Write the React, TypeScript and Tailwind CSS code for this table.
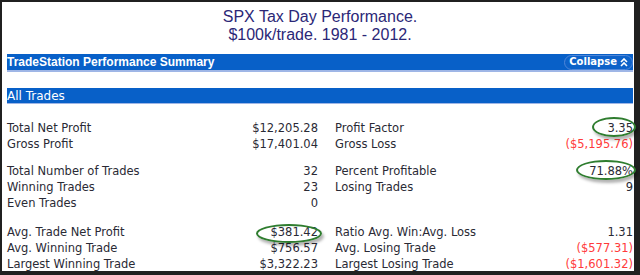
import React from 'react';

type Row = { label: string; value: string; red?: boolean };

const left: Row[][] = [
  [
    { label: 'Total Net Profit', value: '$12,205.28' },
    { label: 'Gross Profit', value: '$17,401.04' },
  ],
  [
    { label: 'Total Number of Trades', value: '32' },
    { label: 'Winning Trades', value: '23' },
    { label: 'Even Trades', value: '0' },
  ],
  [
    { label: 'Avg. Trade Net Profit', value: '$381.42' },
    { label: 'Avg. Winning Trade', value: '$756.57' },
    { label: 'Largest Winning Trade', value: '$3,322.23' },
  ],
];

const right: Row[][] = [
  [
    { label: 'Profit Factor', value: '3.35' },
    { label: 'Gross Loss', value: '($5,195.76)', red: true },
  ],
  [
    { label: 'Percent Profitable', value: '71.88%' },
    { label: 'Losing Trades', value: '9' },
    { label: '', value: '' },
  ],
  [
    { label: 'Ratio Avg. Win:Avg. Loss', value: '1.31' },
    { label: 'Avg. Losing Trade', value: '($577.31)', red: true },
    { label: 'Largest Losing Trade', value: '($1,601.32)', red: true },
  ],
];

function Group({ rows }: { rows: Row[] }) {
  return (
    <div className="flex flex-col">
      {rows.map((r, i) => (
        <div key={i} className="flex h-4 items-center justify-between leading-4">
          <span>{r.label}</span>
          <span className={r.red ? 'text-[#ff3b3b]' : ''}>{r.value}</span>
        </div>
      ))}
    </div>
  );
}

function Column({ groups, className }: { groups: Row[][]; className?: string }) {
  return (
    <div className={'flex flex-col ' + (className ?? '')}>
      <Group rows={groups[0]} />
      <div className="mt-[11px]">
        <Group rows={groups[1]} />
      </div>
      <div className="mt-[13px]">
        <Group rows={groups[2]} />
      </div>
    </div>
  );
}

// green hand-drawn style highlight around a value
function Ring({ className }: { className: string }) {
  return (
    <div
      className={
        'absolute rounded-[50%] border-2 border-[#2f7d2f] shadow-[2px_3px_3px_rgba(0,0,0,0.3)] ' + className
      }
    />
  );
}

export default function App() {
  return (
    <div className="h-[275px] w-[640px] bg-[#202020] pl-[2px] pr-[6px] pt-[2px] pb-[4px]">
      <div className="relative h-full bg-white pl-[5px] pr-[1px] font-['DejaVu_Sans',sans-serif] text-[#2a2a35]">
        {/* title */}
        <div className="pt-[6px] text-center font-['Liberation_Sans',Arial,sans-serif] text-[16px] leading-[18px] text-[#2b2777]">
          <div>SPX Tax Day Performance.</div>
          <div>$100k/trade. 1981 - 2012.</div>
        </div>

        {/* summary bar */}
        <div className="mt-[10px] flex h-[18px] items-center justify-between border-b-2 border-[#9fb6e6] bg-[#0860c8] text-white">
          <span className="font-['Liberation_Sans',Arial,sans-serif] text-[12px] font-bold leading-none">
            TradeStation Performance Summary
          </span>
          <span className="flex h-[15px] items-center gap-[3px] rounded-full border border-[#4f86d8] bg-[#0d62c9] px-[4px] text-[10px] font-bold leading-none">
            Collapse
            <svg width="8" height="9" viewBox="0 0 8 9" fill="none" stroke="white" strokeWidth="1.6">
              <path d="M1 4 L4 1 L7 4" />
              <path d="M1 8 L4 5 L7 8" />
            </svg>
          </span>
        </div>

        <div className="mt-[16px] flex h-[16px] items-center border-b border-[#9fb6e6] bg-[#0860c8] text-[12px] leading-none text-white">
          All Trades
        </div>

        <div className="mt-[16px] flex text-[11.5px]">
          <Column groups={left} className="w-[311px]" />
          <Column groups={right} className="ml-[17px] flex-1" />
        </div>

        <Ring className="left-[590px] top-[115px] h-[20px] w-[44px]" />
        <Ring className="left-[574px] top-[158px] h-[20px] w-[60px]" />
        <Ring className="left-[254px] top-[222px] h-[19px] w-[66px]" />
      </div>
    </div>
  );
}
